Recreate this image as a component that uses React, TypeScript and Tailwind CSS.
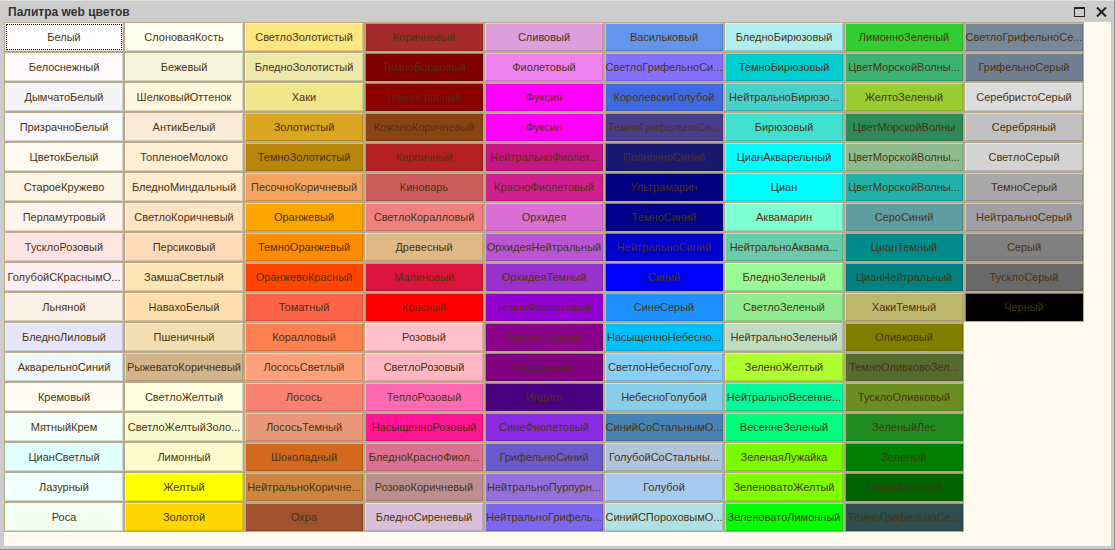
import React from 'react';

type Swatch = [label: string, color: string];

// Web colour palette, laid out column by column (17 rows each)
const COLUMNS: Swatch[][] = [
  [
    ['Белый', '#FFFFFF'],
    ['Белоснежный', '#FFFAFA'],
    ['ДымчатоБелый', '#F5F5F5'],
    ['ПризрачноБелый', '#F8F8FF'],
    ['ЦветокБелый', '#FFFAF0'],
    ['СтароеКружево', '#FDF5E6'],
    ['Перламутровый', '#FFF5EE'],
    ['ТусклоРозовый', '#FFE4E1'],
    ['ГолубойСКраснымО...', '#FFF0F5'],
    ['Льняной', '#FAF0E6'],
    ['БледноЛиловый', '#E6E6FA'],
    ['АкварельноСиний', '#F0F8FF'],
    ['Кремовый', '#FFFBF0'],
    ['МятныйКрем', '#F5FFFA'],
    ['ЦианСветлый', '#E0FFFF'],
    ['Лазурный', '#F0FFFF'],
    ['Роса', '#F0FFF0'],
  ],
  [
    ['СлоноваяКость', '#FFFFF0'],
    ['Бежевый', '#F5F5DC'],
    ['ШелковыйОттенок', '#FFF8DC'],
    ['АнтикБелый', '#FAEBD7'],
    ['ТопленоеМолоко', '#FFEFD5'],
    ['БледноМиндальный', '#FFEBCD'],
    ['СветлоКоричневый', '#FFE4C4'],
    ['Персиковый', '#FFDAB9'],
    ['ЗамшаСветлый', '#FFE4B5'],
    ['НавахоБелый', '#FFDEAD'],
    ['Пшеничный', '#F5DEB3'],
    ['РыжеватоКоричневый', '#D2B48C'],
    ['СветлоЖелтый', '#FFFFE0'],
    ['СветлоЖелтыйЗоло...', '#FAFAD2'],
    ['Лимонный', '#FFFACD'],
    ['Желтый', '#FFFF00'],
    ['Золотой', '#FFD700'],
  ],
  [
    ['СветлоЗолотистый', '#FFE680'],
    ['БледноЗолотистый', '#EEE8AA'],
    ['Хаки', '#F0E68C'],
    ['Золотистый', '#DAA520'],
    ['ТемноЗолотистый', '#B8860B'],
    ['ПесочноКоричневый', '#F4A460'],
    ['Оранжевый', '#FFA500'],
    ['ТемноОранжевый', '#FF8C00'],
    ['ОранжевоКрасный', '#FF4500'],
    ['Томатный', '#FF6347'],
    ['Коралловый', '#FF7F50'],
    ['ЛососьСветлый', '#FFA07A'],
    ['Лосось', '#FA8072'],
    ['ЛососьТемный', '#E9967A'],
    ['Шоколадный', '#D2691E'],
    ['НейтральноКоричне...', '#CD853F'],
    ['Охра', '#A0522D'],
  ],
  [
    ['Коричневый', '#A52A2A'],
    ['ТемноБордовый', '#800000'],
    ['ТемноКрасный', '#8B0000'],
    ['КожаноКоричневый', '#8B4513'],
    ['Кирпичный', '#B22222'],
    ['Киноварь', '#CD5C5C'],
    ['СветлоКоралловый', '#F08080'],
    ['Древесный', '#DEB887'],
    ['Малиновый', '#DC143C'],
    ['Красный', '#FF0000'],
    ['Розовый', '#FFC0CB'],
    ['СветлоРозовый', '#FFB6C1'],
    ['ТеплоРозовый', '#FF69B4'],
    ['НасыщенноРозовый', '#FF1493'],
    ['БледноКрасноФиол...', '#DB7093'],
    ['РозовоКоричневый', '#BC8F8F'],
    ['БледноСиреневый', '#D8BFD8'],
  ],
  [
    ['Сливовый', '#DDA0DD'],
    ['Фиолетовый', '#EE82EE'],
    ['Фуксия', '#FF00FF'],
    ['Фуксин', '#FF00FF'],
    ['НейтральноФиолет...', '#C71585'],
    ['КрасноФиолетовый', '#D02090'],
    ['Орхидея', '#DA70D6'],
    ['ОрхидеяНейтральный', '#BA55D3'],
    ['ОрхидеяТемный', '#9932CC'],
    ['ТемноФиолетовый', '#9400D3'],
    ['ФуксинТемный', '#8B008B'],
    ['Пурпурный', '#800080'],
    ['Индиго', '#4B0082'],
    ['СинеФиолетовый', '#8A2BE2'],
    ['ГрифельноСиний', '#6A5ACD'],
    ['НейтральноПурпурн...', '#9370DB'],
    ['НейтральноГрифель...', '#7B68EE'],
  ],
  [
    ['Васильковый', '#6495ED'],
    ['СветлоГрифельноСи...', '#8470FF'],
    ['КоролевскиГолубой', '#4169E1'],
    ['ТемноГрифельноСи...', '#483D8B'],
    ['ПолночноСиний', '#191970'],
    ['Ультрамарин', '#000080'],
    ['ТемноСиний', '#00008B'],
    ['НейтральноСиний', '#0000CD'],
    ['Синий', '#0000FF'],
    ['СинеСерый', '#1E90FF'],
    ['НасыщенноНебесно...', '#00BFFF'],
    ['СветлоНебесноГолу...', '#87CEFA'],
    ['НебесноГолубой', '#87CEEB'],
    ['СинийСоСтальнымО...', '#4682B4'],
    ['ГолубойСоСтальны...', '#B0C4DE'],
    ['Голубой', '#A6CAF0'],
    ['СинийСПороховымО...', '#B0E0E6'],
  ],
  [
    ['БледноБирюзовый', '#AFEEEE'],
    ['ТемноБирюзовый', '#00CED1'],
    ['НейтральноБирюзо...', '#48D1CC'],
    ['Бирюзовый', '#40E0D0'],
    ['ЦианАкварельный', '#00FFFF'],
    ['Циан', '#00FFFF'],
    ['Аквамарин', '#7FFFD4'],
    ['НейтральноАквама...', '#66CDAA'],
    ['БледноЗеленый', '#98FB98'],
    ['СветлоЗеленый', '#90EE90'],
    ['НейтральноЗеленый', '#C0DCC0'],
    ['ЗеленоЖелтый', '#ADFF2F'],
    ['НейтральноВесенне...', '#00FA9A'],
    ['ВесеннеЗеленый', '#00FF7F'],
    ['ЗеленаяЛужайка', '#7CFC00'],
    ['ЗеленоватоЖелтый', '#7FFF00'],
    ['ЗеленоватоЛимонный', '#00FF00'],
  ],
  [
    ['ЛимонноЗеленый', '#32CD32'],
    ['ЦветМорскойВолны...', '#3CB371'],
    ['ЖелтоЗеленый', '#9ACD32'],
    ['ЦветМорскойВолны', '#2E8B57'],
    ['ЦветМорскойВолны...', '#8FBC8F'],
    ['ЦветМорскойВолны...', '#20B2AA'],
    ['СероСиний', '#5F9EA0'],
    ['ЦианТемный', '#008B8B'],
    ['ЦианНейтральный', '#008080'],
    ['ХакиТемный', '#BDB76B'],
    ['Оливковый', '#808000'],
    ['ТемноОливковоЗел...', '#556B2F'],
    ['ТусклоОливковый', '#6B8E23'],
    ['ЗеленыйЛес', '#228B22'],
    ['Зеленый', '#008000'],
    ['ТемноЗеленый', '#006400'],
    ['ТемноГрифельноСе...', '#2F4F4F'],
  ],
  [
    ['СветлоГрифельноСе...', '#778899'],
    ['ГрифельноСерый', '#708090'],
    ['СеребристоСерый', '#DCDCDC'],
    ['Серебряный', '#C0C0C0'],
    ['СветлоСерый', '#D3D3D3'],
    ['ТемноСерый', '#A9A9A9'],
    ['НейтральноСерый', '#A0A0A4'],
    ['Серый', '#808080'],
    ['ТусклоСерый', '#696969'],
    ['Черный', '#000000'],
  ],
];

function SwatchButton({ label, color, focused }: { label: string; color: string; focused?: boolean }) {
  return (
    <div
      className="relative flex h-[30px] w-[120px] items-center justify-center overflow-hidden whitespace-nowrap border border-[#b6aa88] text-[11px] leading-none text-[#4a3310] shadow-[inset_1px_1px_0_rgba(255,255,255,0.45),inset_-1px_-1px_0_rgba(0,0,0,0.14)]"
      style={{ backgroundColor: color }}
    >
      {focused && (
        <div className="pointer-events-none absolute inset-[1px] border border-dotted border-black" />
      )}
      <span className="px-[1px]">{label}</span>
    </div>
  );
}

export default function App() {
  return (
    <div
      className="flex h-[550px] w-[1115px] flex-col border-r border-b border-[#8c8c8c] bg-[#cccccc]"
      style={{ fontFamily: '"Liberation Sans", Arial, sans-serif' }}
    >
      {/* window caption */}
      <div className="flex h-[22px] shrink-0 items-center justify-between border-t border-[#e4e4e4] pl-[8px] pr-[6px]">
        <span className="text-[12px] font-bold text-[#333333]">Палитра web цветов</span>
        <div className="flex items-center gap-[11px] pr-[1px]">
          <div className="h-[10px] w-[11px] border-[1.5px] border-t-[2.5px] border-[#222222]" />
          <svg width="11" height="10" viewBox="0 0 11 10" className="text-[#222222]">
            <path d="M1 0.5 L10 9.5 M10 0.5 L1 9.5" stroke="currentColor" strokeWidth="2" />
          </svg>
        </div>
      </div>

      {/* palette body */}
      <div className="mb-[3px] ml-[4px] mr-[3px] flex-1 bg-[#fffaf0]">
        <div className="grid grid-flow-col grid-rows-[repeat(17,30px)] justify-start">
          {COLUMNS.flatMap((col, ci) =>
            col.map(([label, color], ri) => (
              <SwatchButton
                key={`${ci}-${ri}`}
                label={label}
                color={color}
                focused={ci === 0 && ri === 0}
              />
            ))
          )}
        </div>
      </div>
    </div>
  );
}
